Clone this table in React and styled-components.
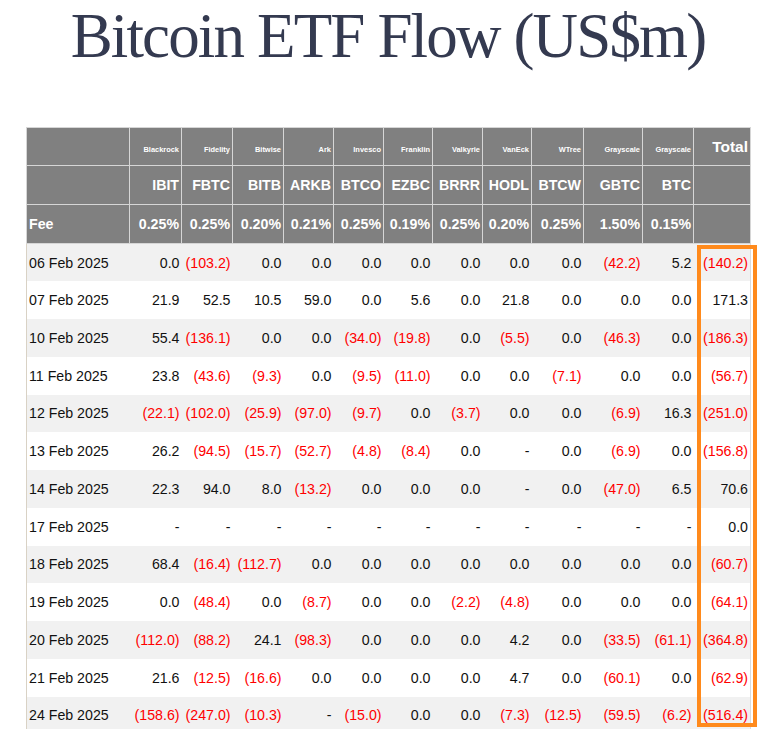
import React from "react";
import styled, { createGlobalStyle } from "styled-components";

const GlobalStyle = createGlobalStyle`
  body {
    margin: 0;
    background: #fff;
    font-family: "Liberation Sans", Arial, sans-serif;
  }
`;

const Page = styled.div`
  width: 774px;
  padding: 0 24px 0 26px;
  box-sizing: border-box;
`;

const Title = styled.h1`
  margin: 5px 0 59px;
  font-family: "Liberation Serif", "Times New Roman", serif;
  font-weight: normal;
  font-size: 63px;
  line-height: 1;
  letter-spacing: -1.85px;
  text-align: center;
  color: #343a50;
`;

const TableWrap = styled.div`
  position: relative;
  width: 724px;
`;

const Table = styled.table`
  width: 724px;
  table-layout: fixed;
  border-collapse: collapse;
  border-left: 1px solid #d9d2c5;
  border-right: 1px solid #dcdcdc;
`;

const Col = styled.col`
  width: ${(p) => p.$w}px;
`;

const HeadRow = styled.tr`
  height: ${(p) => p.$h}px;
`;

const sizes = {
  name: "7.45px",
  ticker: "14.2px",
  total: "15.5px",
};

const HeadCell = styled.th`
  background: #808080;
  color: #fff;
  border: 1px solid #d6d6d6;
  padding: ${(p) => (p.$size === "name" ? "5px 2px 0" : "0 2px")};
  font-weight: bold;
  font-size: ${(p) => sizes[p.$size || "ticker"]};
  text-align: ${(p) => p.$align || "right"};
  vertical-align: middle;
  white-space: nowrap;
  overflow: hidden;
`;

const Row = styled.tr`
  height: 37.75px;
  background: ${(p) => (p.$shaded ? "#f1f1f1" : "#fff")};
`;

const DateCell = styled.td`
  padding: 0 2px;
  font-size: 14.2px;
  color: #111;
  text-align: left;
  white-space: nowrap;
`;

const Cell = styled.td`
  padding: 0 2px;
  font-size: 14.2px;
  color: ${(p) => (p.$neg ? "#f00" : "#111")};
  text-align: right;
  white-space: nowrap;
`;

const Highlight = styled.div`
  position: absolute;
  left: 671px;
  top: 118px;
  width: 60px;
  height: 482px;
  border: 4px solid #ff8a1c;
  box-sizing: border-box;
  pointer-events: none;
`;

const widths = [103, 52, 51, 51, 50, 50, 49, 50, 49, 52, 59, 51, 57];

const funds = [
  { name: "Blackrock", ticker: "IBIT", fee: "0.25%" },
  { name: "Fidelity", ticker: "FBTC", fee: "0.25%" },
  { name: "Bitwise", ticker: "BITB", fee: "0.20%" },
  { name: "Ark", ticker: "ARKB", fee: "0.21%" },
  { name: "Invesco", ticker: "BTCO", fee: "0.25%" },
  { name: "Franklin", ticker: "EZBC", fee: "0.19%" },
  { name: "Valkyrie", ticker: "BRRR", fee: "0.25%" },
  { name: "VanEck", ticker: "HODL", fee: "0.20%" },
  { name: "WTree", ticker: "BTCW", fee: "0.25%" },
  { name: "Grayscale", ticker: "GBTC", fee: "1.50%" },
  { name: "Grayscale", ticker: "BTC", fee: "0.15%" },
];

const rows = [
  ["06 Feb 2025", "0.0", "(103.2)", "0.0", "0.0", "0.0", "0.0", "0.0", "0.0", "0.0", "(42.2)", "5.2", "(140.2)"],
  ["07 Feb 2025", "21.9", "52.5", "10.5", "59.0", "0.0", "5.6", "0.0", "21.8", "0.0", "0.0", "0.0", "171.3"],
  ["10 Feb 2025", "55.4", "(136.1)", "0.0", "0.0", "(34.0)", "(19.8)", "0.0", "(5.5)", "0.0", "(46.3)", "0.0", "(186.3)"],
  ["11 Feb 2025", "23.8", "(43.6)", "(9.3)", "0.0", "(9.5)", "(11.0)", "0.0", "0.0", "(7.1)", "0.0", "0.0", "(56.7)"],
  ["12 Feb 2025", "(22.1)", "(102.0)", "(25.9)", "(97.0)", "(9.7)", "0.0", "(3.7)", "0.0", "0.0", "(6.9)", "16.3", "(251.0)"],
  ["13 Feb 2025", "26.2", "(94.5)", "(15.7)", "(52.7)", "(4.8)", "(8.4)", "0.0", "-", "0.0", "(6.9)", "0.0", "(156.8)"],
  ["14 Feb 2025", "22.3", "94.0", "8.0", "(13.2)", "0.0", "0.0", "0.0", "-", "0.0", "(47.0)", "6.5", "70.6"],
  ["17 Feb 2025", "-", "-", "-", "-", "-", "-", "-", "-", "-", "-", "-", "0.0"],
  ["18 Feb 2025", "68.4", "(16.4)", "(112.7)", "0.0", "0.0", "0.0", "0.0", "0.0", "0.0", "0.0", "0.0", "(60.7)"],
  ["19 Feb 2025", "0.0", "(48.4)", "0.0", "(8.7)", "0.0", "0.0", "(2.2)", "(4.8)", "0.0", "0.0", "0.0", "(64.1)"],
  ["20 Feb 2025", "(112.0)", "(88.2)", "24.1", "(98.3)", "0.0", "0.0", "0.0", "4.2", "0.0", "(33.5)", "(61.1)", "(364.8)"],
  ["21 Feb 2025", "21.6", "(12.5)", "(16.6)", "0.0", "0.0", "0.0", "0.0", "4.7", "0.0", "(60.1)", "0.0", "(62.9)"],
  ["24 Feb 2025", "(158.6)", "(247.0)", "(10.3)", "-", "(15.0)", "0.0", "0.0", "(7.3)", "(12.5)", "(59.5)", "(6.2)", "(516.4)"],
];

export default function App() {
  return (
    <Page>
      <GlobalStyle />
      <Title>Bitcoin ETF Flow (US$m)</Title>
      <TableWrap>
        <Table>
          <colgroup>
            {widths.map((w, i) => (
              <Col key={i} $w={w} />
            ))}
          </colgroup>
          <thead>
            <HeadRow $h={38}>
              <HeadCell />
              {funds.map((f, i) => (
                <HeadCell key={i} $size="name">
                  {f.name}
                </HeadCell>
              ))}
              <HeadCell $size="total">Total</HeadCell>
            </HeadRow>
            <HeadRow $h={39}>
              <HeadCell />
              {funds.map((f) => (
                <HeadCell key={f.ticker}>{f.ticker}</HeadCell>
              ))}
              <HeadCell />
            </HeadRow>
            <HeadRow $h={39}>
              <HeadCell $align="left">Fee</HeadCell>
              {funds.map((f) => (
                <HeadCell key={f.ticker}>{f.fee}</HeadCell>
              ))}
              <HeadCell />
            </HeadRow>
          </thead>
          <tbody>
            {rows.map(([date, ...vals], r) => (
              <Row key={date} $shaded={r % 2 === 0}>
                <DateCell>{date}</DateCell>
                {vals.map((v, i) => (
                  <Cell key={i} $neg={v.startsWith("(")}>
                    {v}
                  </Cell>
                ))}
              </Row>
            ))}
          </tbody>
        </Table>
        <Highlight />
      </TableWrap>
    </Page>
  );
}
